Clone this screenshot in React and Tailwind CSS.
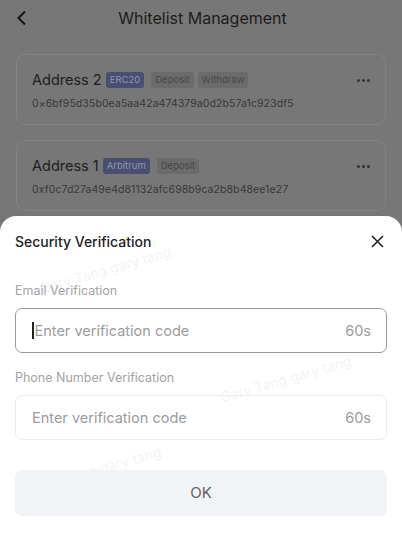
import React from 'react';

const addresses = [
  {
    name: 'Address 2',
    chain: 'ERC20',
    tags: ['Deposit', 'Withdraw'],
    hash: '0×6bf95d35b0ea5aa42a474379a0d2b57a1c923df5',
  },
  {
    name: 'Address 1',
    chain: 'Arbitrum',
    tags: ['Deposit'],
    hash: '0xf0c7d27a49e4d81132afc698b9ca2b8b48ee1e27',
  },
];

const Watermark = ({ className }) => (
  <div
    className={`absolute text-[14px] leading-[16px] text-[#f4f4f4] whitespace-nowrap -rotate-[16deg] pointer-events-none select-none ${className}`}
  >
    Gary Tang gary tang
  </div>
);

const CodeField = ({ label, active }) => (
  <div className="flex flex-col">
    <div className="text-[12.5px] text-[#a3a3a3] mb-[9px] leading-[16px]">{label}</div>
    <div
      className={`h-[45px] rounded-[7px] border flex items-center pl-4 pr-[15px] ${
        active ? 'border-[#9a9a9a]' : 'border-[#ececec]'
      }`}
    >
      {active && <span className="w-[1.5px] h-[17px] bg-[#222] mr-[1px]" />}
      <span className="flex-1 text-[14.5px] text-[#9c9c9c]">Enter verification code</span>
      <span className="text-[14.5px] text-[#9c9c9c]">60s</span>
    </div>
  </div>
);

export default function App() {
  return (
    <div
      className="relative w-[402px] h-[535px] overflow-hidden bg-[#777777]"
      style={{ fontFamily: 'Inter, "Noto Sans", sans-serif' }}
    >
      {/* background page, dimmed */}
      <div className="flex items-center h-[36px] px-[14px]">
        <svg width="14" height="16" viewBox="0 0 14 16" fill="none" className="ml-[1px]">
          <path d="M10 1.5 3.5 8l6.5 6.5" stroke="#151515" strokeWidth="2" />
        </svg>
        <div className="flex-1 text-center text-[16px] text-[#1c1c1c] -ml-[14px] pl-[2px]">
          Whitelist Management
        </div>
      </div>

      <div className="flex flex-col gap-[15px] px-4 pt-[18px]">
        {addresses.map((a) => (
          <div
            key={a.name}
            className="h-[71px] rounded-[9px] border border-[#828282] px-[15px] pt-[15px] flex flex-col"
          >
            <div className="flex items-center">
              <span className="text-[14.5px] text-[#202020] leading-[20px]">{a.name}</span>
              <span className="ml-[4px] h-[16px] px-[4px] rounded-[3px] bg-[#4a4e6f] text-[9.5px] text-[#8f94b2] flex items-center">
                {a.chain}
              </span>
              {a.tags.map((t, i) => (
                <span
                  key={t}
                  className={`${i === 0 ? 'ml-[7px]' : 'ml-[4px]'} h-[16px] px-[4px] rounded-[3px] bg-[#6b6b6b] text-[9.5px] text-[#474747] flex items-center`}
                >
                  {t}
                </span>
              ))}
              <span className="ml-auto flex gap-[2px]">
                <span className="w-[3px] h-[3px] rounded-full bg-[#333]" />
                <span className="w-[3px] h-[3px] rounded-full bg-[#333]" />
                <span className="w-[3px] h-[3px] rounded-full bg-[#333]" />
              </span>
            </div>
            <div className="mt-[6px] text-[10.5px] text-[#383838] tracking-[0.08px]">{a.hash}</div>
          </div>
        ))}
      </div>

      {/* bottom sheet */}
      <div className="absolute left-0 right-0 top-[216px] bottom-0 bg-white rounded-t-[16px] px-[15px] pt-[15px]">
        <Watermark className="left-[38px] top-[46px]" />
        <Watermark className="left-[218px] top-[155px]" />
        <Watermark className="left-[28px] top-[246px]" />

        <div className="relative flex items-center justify-between h-[20px]">
          <span className="text-[14px] font-medium text-[#222]">Security Verification</span>
          <svg width="13" height="13" viewBox="0 0 13 13" className="mr-[3px]">
            <path d="M1 1l11 11M12 1 1 12" stroke="#222" strokeWidth="1.6" />
          </svg>
        </div>

        <div className="relative flex flex-col gap-[17px] mt-[32px]">
          <CodeField label="Email Verification" active />
          <CodeField label="Phone Number Verification" />
        </div>

        <button className="relative mt-[30px] w-full h-[46px] rounded-[7px] bg-[#f2f3f6] text-[15px] text-[#636363]">
          OK
        </button>
      </div>
    </div>
  );
}
